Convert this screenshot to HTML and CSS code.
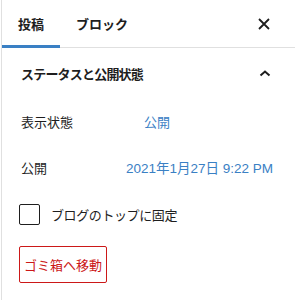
FILE: index.html
```html
<!DOCTYPE html>
<html lang="ja">
<head>
    <meta charset="UTF-8">
    <title>投稿設定</title>
    <link rel="stylesheet" href="styles.css">
</head>
<body>
    <div class="sidebar">
        <div class="tabs">
            <button class="tab active">投稿</button>
            <button class="tab">ブロック</button>
            <button class="close" aria-label="閉じる">
                <svg width="24" height="24" viewBox="0 0 24 24"><path d="M7 7l10 10M17 7L7 17"/></svg>
            </button>
        </div>

        <div class="panel">
            <div class="panel-head">
                <span>ステータスと公開状態</span>
                <svg width="24" height="24" viewBox="0 0 24 24"><path d="M7.5 14.5L12 10.5l4.5 4"/></svg>
            </div>

            <div class="row">
                <span class="label">表示状態</span>
                <a class="value visibility" href="#">公開</a>
            </div>

            <div class="row">
                <span class="label">公開</span>
                <a class="value date" href="#">2021年1月27日 9:22 PM</a>
            </div>

            <label class="check">
                <input type="checkbox">
                <span>ブログのトップに固定</span>
            </label>

            <button class="trash">ゴミ箱へ移動</button>
        </div>
    </div>
</body>
</html>
```

FILE: styles.css
```css
body {
    margin: 0;
    background: white;
    font-family: "Liberation Sans", "Noto Sans CJK JP", sans-serif;
    font-size: 13px;
    color: #1e1e1e;
}

.sidebar {
    border-left: 1px solid #e0e0e0;
    margin-left: 1px;
    height: 300px;
}

.tabs {
    display: flex;
    align-items: center;
    height: 48px;
    border-bottom: 1px solid #e0e0e0;
    box-sizing: border-box;
}

.tab {
    background: none;
    border: none;
    height: 48px;
    padding: 3px 16px 0;
    font: inherit;
    font-weight: 600;
    color: #1e1e1e;
    box-sizing: border-box;
    border-bottom: 3px solid transparent;
}

.tab.active {
    border-bottom-color: #3a80c4;
}

.close {
    margin-left: auto;
    margin-right: 19px;
    background: none;
    border: none;
    padding: 0;
    display: flex;
}

.close svg,
.panel-head svg {
    fill: none;
    stroke: #1e1e1e;
    stroke-width: 2;
}

.close svg {
    stroke-width: 1.8;
}

.panel {
    padding: 0 19px;
}

.panel-head {
    display: flex;
    justify-content: space-between;
    align-items: center;
    height: 50px;
    margin-right: -1px;
    font-weight: 600;
    letter-spacing: -0.8px;
}

.row {
    display: flex;
    align-items: center;
    height: 46px;
}

.row:first-of-type {
    margin-top: 8px;
}

.label {
    width: 105px;
}

.value {
    color: #3a80c4;
    text-decoration: none;
}

.visibility {
    margin-left: 18px;
}

.date {
    font-size: 13.5px;
}

.check {
    display: flex;
    align-items: center;
    gap: 11px;
    margin: 14px 0 0 -2px;
    letter-spacing: -0.4px;
}

.check input {
    appearance: none;
    margin: 0;
    width: 21px;
    height: 21px;
    border: 1px solid #1e1e1e;
    border-radius: 2px;
}

.trash {
    margin: 21px 0 0 -2px;
    height: 37px;
    padding: 0 4px;
    background: white;
    border: 1px solid #cc1818;
    border-radius: 2px;
    color: #cc1818;
    font: inherit;
}
```
